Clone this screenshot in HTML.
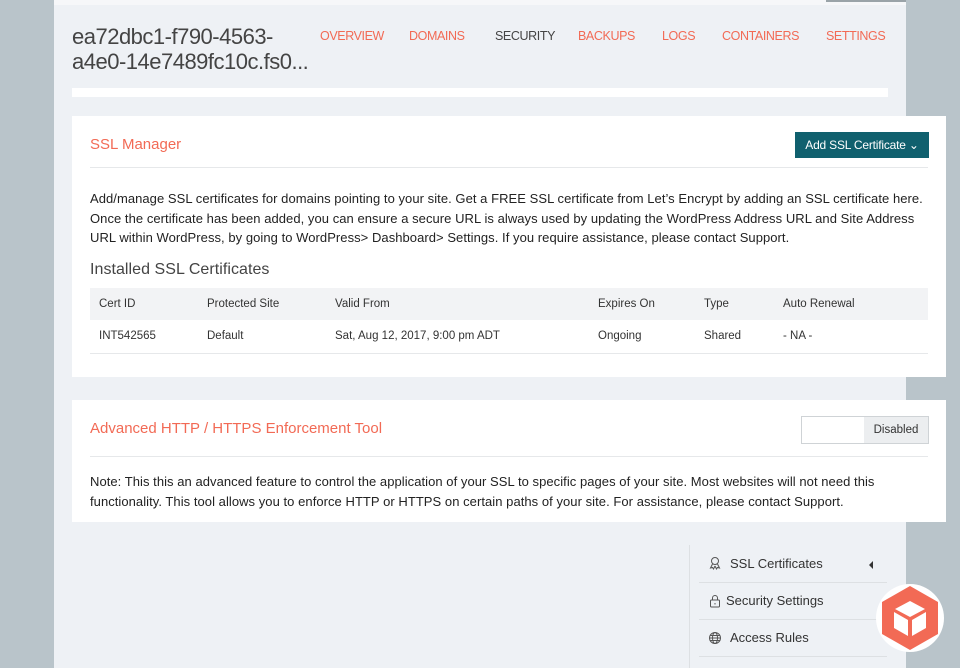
<!DOCTYPE html>
<html><head><style>
*{box-sizing:border-box;margin:0;padding:0}
body{width:960px;height:668px;overflow:hidden;background:#b9c4ca;font-family:"Liberation Sans",sans-serif;position:relative;color:#333}
.panel{position:absolute;left:54px;top:0;width:852px;height:668px;background:#eef1f5}
.topbar{position:absolute;left:54px;top:0;width:852px;height:5px;background:#f6f7f9}
.topbar2{position:absolute;left:826px;top:0;width:80px;height:2px;background:#9aa3a8}
.title{position:absolute;left:72px;top:24px;font-size:22px;line-height:25px;color:#444;letter-spacing:-0.5px}
.nav{position:absolute;top:29px;font-size:12.5px;color:#f26a55;letter-spacing:-0.4px}
.strip{position:absolute;left:72px;top:88px;width:816px;height:9px;background:#fff}
.card{position:absolute;left:72px;width:874px;background:#fff}
.h{position:absolute;left:18px;font-size:15px;color:#f26a55}
.btn{position:absolute;left:723px;top:16px;width:134px;height:26px;background:#10606e;color:#fff;font-size:12px;line-height:26px;text-align:center;letter-spacing:-0.2px}
.hr{position:absolute;left:18px;width:838px;height:1px;background:#e6e8ea}
.p{position:absolute;left:18px;font-size:13px;line-height:19.5px;color:#222;width:860px;letter-spacing:0.05px}
table{position:absolute;left:18px;top:172px;width:838px;border-collapse:collapse;font-size:11.5px;color:#333}
td{height:33px;padding-left:9px}
tr.hd td{background:#f2f3f5;height:32px}
tr.r td{border-bottom:1px solid #e6e8ea}
.tog{position:absolute;left:729px;top:16px;width:128px;height:28px;border:1px solid #cfd3d6;background:#fff}
.tog span{position:absolute;right:0;top:0;width:64px;height:26px;background:#eceef0;font-size:11.5px;line-height:26px;text-align:center;color:#333}
.side{position:absolute;left:689px;top:545px;width:1px;height:123px;background:#dde0e3}
.si{position:absolute;left:708px;font-size:13px;color:#333}
.sl{position:absolute;left:699px;width:188px;height:1px;background:#dde0e3}
</style></head><body>
<div class="panel"></div><div class="topbar"></div><div class="topbar2"></div>
<div class="title">ea72dbc1-f790-4563-<br>a4e0-14e7489fc10c.fs0...</div>
<div class="nav" style="left:320px">OVERVIEW</div>
<div class="nav" style="left:409px">DOMAINS</div>
<div class="nav" style="left:495px;color:#444">SECURITY</div>
<div class="nav" style="left:578px">BACKUPS</div>
<div class="nav" style="left:662px">LOGS</div>
<div class="nav" style="left:722px">CONTAINERS</div>
<div class="nav" style="left:826px">SETTINGS</div>
<div class="strip"></div>
<div class="card" style="top:116px;height:261px">
<div class="h" style="top:20px">SSL Manager</div>
<div class="btn">Add SSL Certificate ⌄</div>
<div class="hr" style="top:51px"></div>
<div class="p" style="top:73px">Add/manage SSL certificates for domains pointing to your site. Get a FREE SSL certificate from Let’s Encrypt by adding an SSL certificate here.<br>Once the certificate has been added, you can ensure a secure URL is always used by updating the WordPress Address URL and Site Address<br>URL within WordPress, by going to WordPress&gt; Dashboard&gt; Settings. If you require assistance, please contact Support.</div>
<div class="p" style="top:144px;font-size:16px;color:#444">Installed SSL Certificates</div>
<table>
<tr class="hd"><td style="width:108px">Cert ID</td><td style="width:128px">Protected Site</td><td style="width:263px">Valid From</td><td style="width:106px">Expires On</td><td style="width:79px">Type</td><td>Auto Renewal</td></tr>
<tr class="r"><td>INT542565</td><td>Default</td><td>Sat, Aug 12, 2017, 9:00 pm ADT</td><td>Ongoing</td><td>Shared</td><td>- NA -</td></tr>
</table>
</div>
<div class="card" style="top:400px;height:122px">
<div class="h" style="top:20px">Advanced HTTP / HTTPS Enforcement Tool</div>
<div class="tog"><span>Disabled</span></div>
<div class="hr" style="top:56px"></div>
<div class="p" style="top:72px">Note: This this an advanced feature to control the application of your SSL to specific pages of your site. Most websites will not need this<br>functionality. This tool allows you to enforce HTTP or HTTPS on certain paths of your site. For assistance, please contact Support.</div>
</div>
<div class="side"></div>
<svg style="position:absolute;left:708px;top:556px" width="14" height="14" viewBox="0 0 14 14" fill="none" stroke="#555" stroke-width="1"><circle cx="7" cy="5" r="3.5"/><path d="M4.5 8l-2 4 2-.5 1 1.5 1.5-3M9.5 8l2 4-2-.5-1 1.5-1.5-3"/></svg>
<div class="si" style="left:730px;top:556px">SSL Certificates</div>
<div style="position:absolute;left:869px;top:561px;width:0;height:0;border-top:4px solid transparent;border-bottom:4px solid transparent;border-right:4px solid #333"></div>
<div class="sl" style="top:582px"></div>
<svg style="position:absolute;left:709px;top:594px" width="12" height="14" viewBox="0 0 12 14" fill="none" stroke="#555" stroke-width="1"><rect x="1.5" y="6" width="9" height="7" rx="1"/><path d="M3.5 6V4a2.5 2.5 0 015 0v2M6 9v1.5"/></svg>
<div class="si" style="left:726px;top:593px">Security Settings</div>
<div class="sl" style="top:619px"></div>
<svg style="position:absolute;left:708px;top:631px" width="14" height="14" viewBox="0 0 14 14" fill="none" stroke="#555" stroke-width="1"><circle cx="7" cy="7" r="5.5"/><ellipse cx="7" cy="7" rx="2.5" ry="5.5"/><path d="M1.5 7h11M2.5 4.5h9M2.5 9.5h9"/></svg>
<div class="si" style="left:730px;top:630px">Access Rules</div>
<div class="sl" style="top:656px"></div>
<div style="position:absolute;left:876px;top:584px;width:68px;height:68px;border-radius:50%;background:#fff"></div>
<svg style="position:absolute;left:879px;top:585px" width="62" height="66" viewBox="0 0 62 66"><polygon points="31,1 59,17 59,49 31,65 3,49 3,17" fill="#f26a55"/><g fill="#fff"><polygon points="31,16 46,24 31,32 16,24"/><polygon points="15,27 29,35 29,51 15,43"/><polygon points="47,27 33,35 33,51 47,43"/></g></svg>
</body></html>
